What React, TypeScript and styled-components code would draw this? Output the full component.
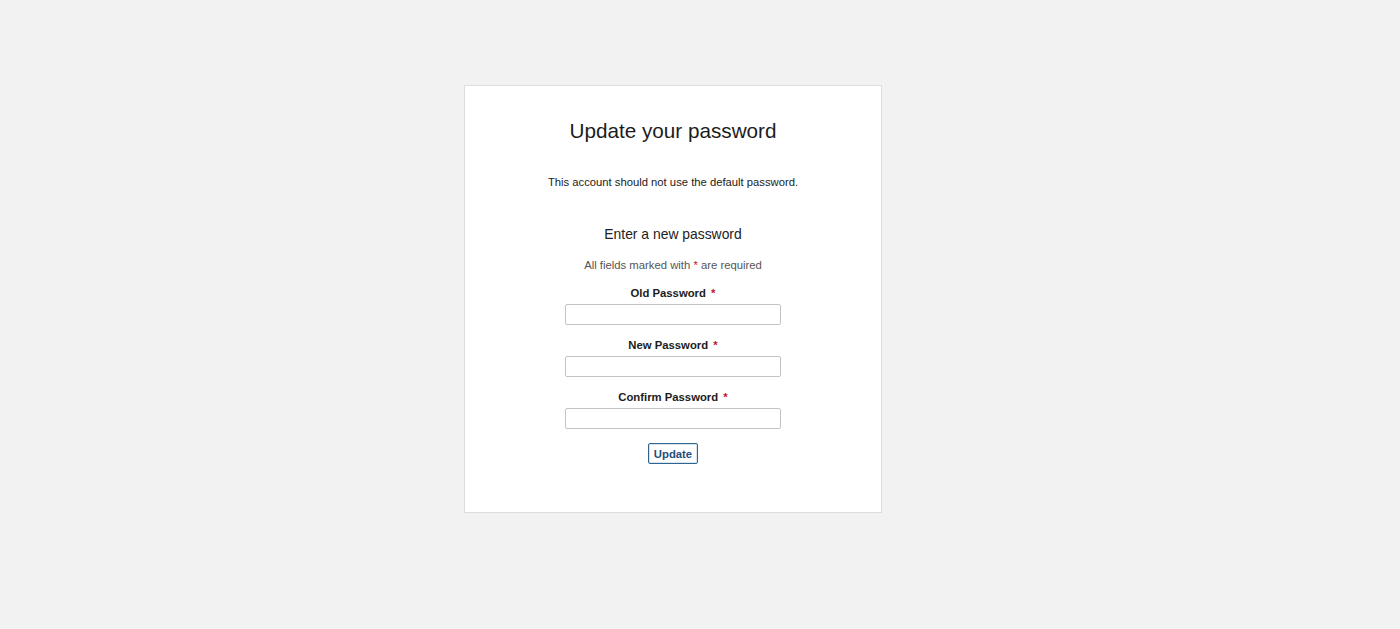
import React from 'react';
import styled, { createGlobalStyle } from 'styled-components';

const GlobalStyle = createGlobalStyle`
  html, body {
    margin: 0;
    padding: 0;
    background: #f2f2f2;
    font-family: 'Liberation Sans', Arial, sans-serif;
    color: #222;
  }
`;

const Page = styled.div`
  min-height: 629px;
  box-sizing: border-box;
  padding: 85px 0 0 464px;
`;

const Card = styled.div`
  width: 418px;
  box-sizing: border-box;
  background: #fff;
  border: 1px solid #dddddd;
  padding: 32px 0 48px;
  display: flex;
  flex-direction: column;
  align-items: center;
  text-align: center;
`;

const Title = styled.h1`
  margin: 0;
  font-size: 20.7px;
  line-height: 26px;
  font-weight: normal;
  color: #1c1c1c;
`;

const Notice = styled.p`
  margin: 30px 0 0;
  font-size: 11.25px;
  line-height: 16px;
  color: #222;
`;

const SectionTitle = styled.h2`
  margin: 34px 0 0;
  font-size: 13.9px;
  line-height: 20px;
  font-weight: normal;
  color: #222;
`;

const Hint = styled.p`
  margin: 13px 0 0;
  font-size: 11.3px;
  line-height: 16px;
  color: #555;
`;

const Star = styled.span<{ $gap?: number }>`
  color: #c8102e;
  margin-left: ${p => p.$gap ?? 0}px;
`;

const Form = styled.form`
  display: flex;
  flex-direction: column;
  align-items: center;
  margin-top: 12px;
  gap: 12px;
`;

const Field = styled.div`
  display: flex;
  flex-direction: column;
  align-items: center;
  gap: 3px;
`;

const Label = styled.label`
  font-size: 11.3px;
  line-height: 16px;
  font-weight: bold;
  color: #1c1c1c;
`;

const Input = styled.input`
  width: 216px;
  height: 21px;
  box-sizing: border-box;
  border: 1px solid #c3c3c3;
  border-radius: 2px;
  background: #fff;
  padding: 0 4px;
  font-family: inherit;
  font-size: 11px;
`;

const Button = styled.button`
  margin-top: 2px;
  width: 50px;
  height: 21px;
  padding: 0;
  box-sizing: border-box;
  background: #fff;
  border: 1px solid #2d6590;
  box-shadow: inset 0 0 0 1px #d8e4ee;
  border-radius: 2px;
  font-family: inherit;
  font-size: 11.3px;
  font-weight: bold;
  color: #1f4f7a;
  cursor: pointer;
`;

const fields = ['Old Password', 'New Password', 'Confirm Password'];

export default function App() {
  return (
    <>
      <GlobalStyle />
      <Page>
        <Card>
          <Title>Update your password</Title>
          <Notice>This account should not use the default password.</Notice>
          <SectionTitle>Enter a new password</SectionTitle>
          <Hint>
            All fields marked with <Star>*</Star> are required
          </Hint>
          <Form onSubmit={e => e.preventDefault()}>
            {fields.map(f => (
              <Field key={f}>
                <Label>
                  {f} <Star $gap={2}>*</Star>
                </Label>
                <Input type="password" />
              </Field>
            ))}
            <Button type="submit">Update</Button>
          </Form>
        </Card>
      </Page>
    </>
  );
}
